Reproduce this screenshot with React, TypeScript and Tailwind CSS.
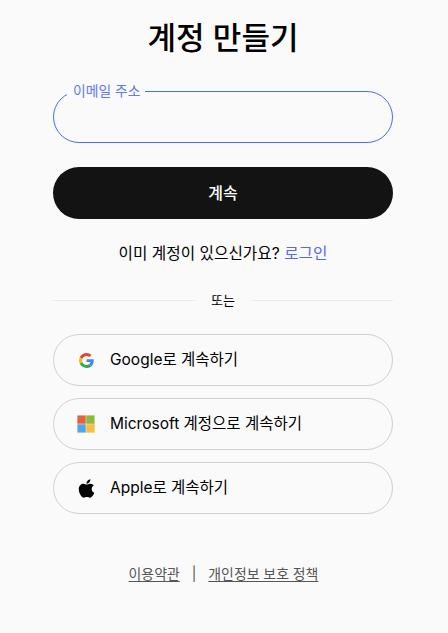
import React from 'react'

const font = "font-['Inter','Noto_Sans_CJK_KR',sans-serif]"

function GoogleIcon() {
  return (
    <svg width="15" height="15" viewBox="0 0 48 48">
      <path fill="#EA4335" d="M24 9.5c3.54 0 6.71 1.22 9.21 3.6l6.85-6.85C35.9 2.38 30.47 0 24 0 14.62 0 6.51 5.38 2.56 13.22l7.98 6.19C12.43 13.72 17.74 9.5 24 9.5z" />
      <path fill="#4285F4" d="M46.98 24.55c0-1.57-.15-3.09-.38-4.55H24v9.02h12.94c-.58 2.96-2.26 5.48-4.78 7.18l7.73 6c4.51-4.18 7.09-10.36 7.09-17.65z" />
      <path fill="#FBBC05" d="M10.53 28.59c-.48-1.45-.76-2.99-.76-4.59s.27-3.14.76-4.59l-7.98-6.19C.92 16.46 0 20.12 0 24c0 3.88.92 7.54 2.56 10.78l7.97-6.19z" />
      <path fill="#34A853" d="M24 48c6.48 0 11.93-2.13 15.89-5.81l-7.73-6c-2.15 1.45-4.92 2.3-8.16 2.3-6.26 0-11.57-4.22-13.47-9.91l-7.98 6.19C6.51 42.62 14.62 48 24 48z" />
    </svg>
  )
}

function MicrosoftIcon() {
  return (
    <svg width="18" height="18" viewBox="0 0 18 18">
      <rect x="0" y="0" width="18" height="18" fill="#e8e8e8" />
      <rect x="0.5" y="0.5" width="8.2" height="8.2" fill="#E6623A" />
      <rect x="9.3" y="0.5" width="8.2" height="8.2" fill="#8DB83A" />
      <rect x="0.5" y="9.3" width="8.2" height="8.2" fill="#4FA6EE" />
      <rect x="9.3" y="9.3" width="8.2" height="8.2" fill="#FBBE3E" />
    </svg>
  )
}

function AppleIcon() {
  return (
    <svg width="19" height="21" viewBox="0 0 384 512" fill="#000">
      <path d="M318.7 268.7c-.2-36.7 16.4-64.4 50-84.8-18.8-26.9-47.2-41.7-84.7-44.6-35.5-2.8-74.3 20.7-88.5 20.7-15 0-49.4-19.7-76.4-19.7C63.3 141.2 4 184.8 4 273.5q0 39.3 14.4 81.2c12.8 36.7 59 126.7 107.2 125.2 25.2-.6 43-17.9 75.8-17.9 31.8 0 48.3 17.9 76.4 17.9 48.6-.7 90.4-82.5 102.6-119.3-65.2-30.7-61.7-90-61.7-91.9zm-56.6-164.2c27.3-32.4 24.8-61.9 24-72.5-24.1 1.4-52 16.4-67.9 34.9-17.5 19.8-27.8 44.3-25.6 71.9 26.1 2 49.9-11.4 69.5-34.3z" />
    </svg>
  )
}

function SocialButton({ icon, label }: { icon: React.ReactNode; label: string }) {
  return (
    <button className="flex h-[52px] w-full items-center rounded-full border border-[#d0d0d0] text-[15.5px] text-black">
      <span className="flex w-[56px] shrink-0 items-center justify-center pl-[8px]">{icon}</span>
      <span>{label}</span>
    </button>
  )
}

export default function App() {
  return (
    <div className={`${font} min-h-[633px] bg-[#fafafa] text-black`}>
      <div className="flex w-[446px] flex-col items-center">
        {/* Title */}
        <h1 className="mt-[14px] h-[48px] text-[31px] leading-[48px] font-medium">계정 만들기</h1>

        <div className="mt-[29px] flex w-[340px] flex-col">
          {/* Email field */}
          <div className="relative h-[52px] rounded-full border border-[#4a6cf0]">
            <span className="absolute top-[-10px] left-[13px] bg-[#fafafa] pr-[5px] pl-[6px] text-[13.8px] leading-[18px] text-[#6078f0]">
              이메일 주소
            </span>
          </div>

          <button className="mt-[24px] h-[52px] rounded-full bg-[#131313] text-[16px] font-medium text-white">
            계속
          </button>

          <p className="mt-[24px] text-center text-[15.7px] leading-[22px]">
            이미 계정이 있으신가요? <span className="text-[#5468f0]">로그인</span>
          </p>

          {/* Divider */}
          <div className="mt-[25px] flex items-center">
            <div className="h-px flex-1 bg-[#ececec]" />
            <span className="px-[16px] text-[13px] leading-[20px]">또는</span>
            <div className="h-px flex-1 bg-[#ececec]" />
          </div>

          <div className="mt-[24px] flex flex-col gap-[12px]">
            <SocialButton icon={<GoogleIcon />} label="Google로 계속하기" />
            <SocialButton icon={<MicrosoftIcon />} label="Microsoft 계정으로 계속하기" />
            <SocialButton icon={<AppleIcon />} label="Apple로 계속하기" />
          </div>

          {/* Footer */}
          <div className="mt-[50px] flex items-center justify-center pl-[1px] text-[13.9px] leading-[20px] text-[#555]">
            <span className="underline underline-offset-2">이용약관</span>
            <span className="px-[12px]">|</span>
            <span className="underline underline-offset-2">개인정보 보호 정책</span>
          </div>
        </div>
      </div>
    </div>
  )
}
